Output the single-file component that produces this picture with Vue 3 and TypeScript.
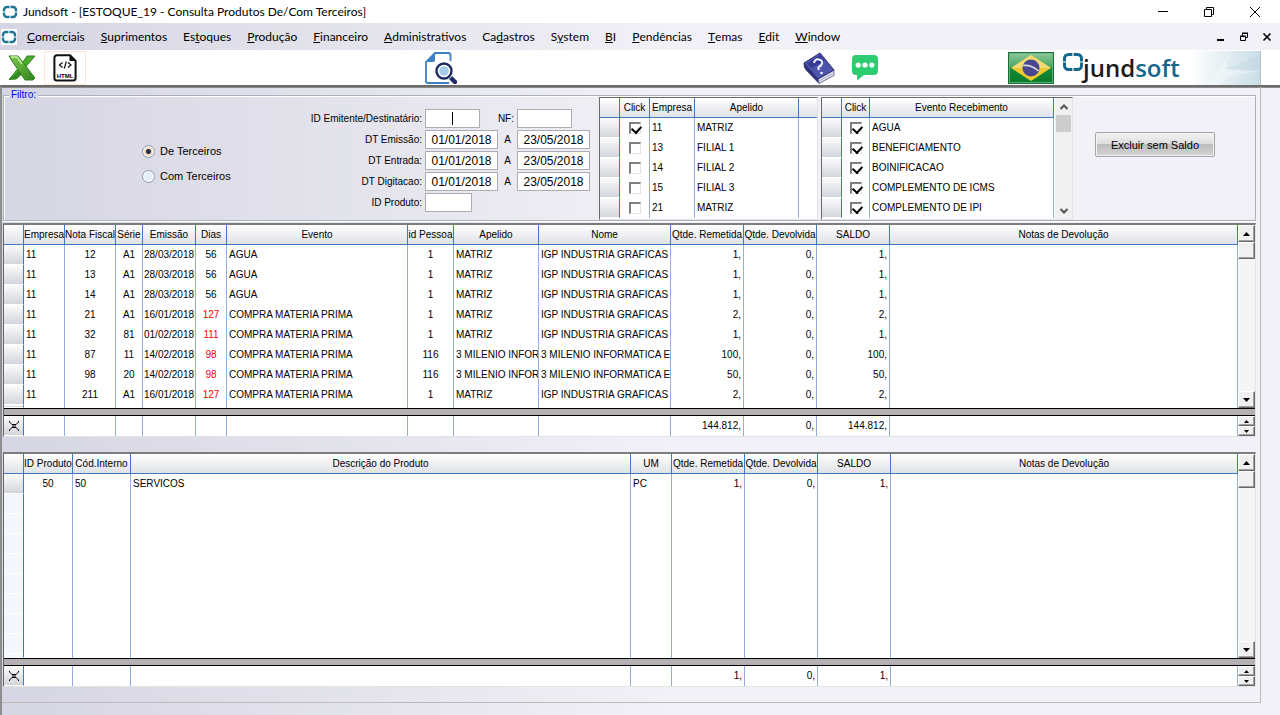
<script setup lang="ts">
import { ref } from 'vue'

type Align = 'left' | 'center' | 'right'
interface Column { title: string; width: number; align: Align }
interface Grid {
  id: string
  label: string
  columns: Column[]
  rows: string[][]
  totals: string[]
}

const menus: [string, string, string][] = [
  ['', 'C', 'omerciais'], ['', 'S', 'uprimentos'], ['Es', 't', 'oques'], ['', 'P', 'rodução'],
  ['', 'F', 'inanceiro'], ['', 'A', 'dministrativos'], ['Ca', 'd', 'astros'], ['S', 'y', 'stem'],
  ['', 'B', 'I'], ['', 'P', 'endências'], ['', 'T', 'emas'], ['', 'E', 'dit'], ['', 'W', 'indow'],
]

const origem = ref('de')
const idEmitente = ref('')
const notaFiscal = ref('')
const idProduto = ref('')
const periodos = ref([
  { id: 'emissao', label: 'DT Emissão:', de: '01/01/2018', ate: '23/05/2018' },
  { id: 'entrada', label: 'DT Entrada:', de: '01/01/2018', ate: '23/05/2018' },
  { id: 'digitacao', label: 'DT Digitacao:', de: '01/01/2018', ate: '23/05/2018' },
])

const empresas = ref([
  { click: true, id: '11', apelido: 'MATRIZ' },
  { click: false, id: '13', apelido: 'FILIAL 1' },
  { click: false, id: '14', apelido: 'FILIAL 2' },
  { click: false, id: '15', apelido: 'FILIAL 3' },
  { click: false, id: '21', apelido: 'MATRIZ' },
])
const eventos = ref(
  ['AGUA', 'BENEFICIAMENTO', 'BOINIFICACAO', 'COMPLEMENTO DE ICMS', 'COMPLEMENTO DE IPI']
    .map((nome) => ({ click: true, nome })),
)

const matriz = ['1', 'MATRIZ', 'IGP INDUSTRIA GRAFICAS']
const milenio = ['116', '3 MILENIO INFOR', '3 MILENIO INFORMATICA E J']
const compra = 'COMPRA MATERIA PRIMA'

const grids: Grid[] = [
  {
    id: 'notas',
    label: 'Notas fiscais',
    columns: [
      { title: 'Empresa', width: 41, align: 'left' },
      { title: 'Nota Fiscal', width: 51, align: 'center' },
      { title: 'Série', width: 27, align: 'center' },
      { title: 'Emissão', width: 53, align: 'center' },
      { title: 'Dias', width: 31, align: 'center' },
      { title: 'Evento', width: 181, align: 'left' },
      { title: 'id Pessoa', width: 46, align: 'center' },
      { title: 'Apelido', width: 85, align: 'left' },
      { title: 'Nome', width: 132, align: 'left' },
      { title: 'Qtde. Remetida', width: 73, align: 'right' },
      { title: 'Qtde. Devolvida', width: 73, align: 'right' },
      { title: 'SALDO', width: 73, align: 'right' },
      { title: 'Notas de Devolução', width: 0, align: 'left' },
    ],
    rows: [
      ['11', '12', 'A1', '28/03/2018', '56', 'AGUA', ...matriz, '1,', '0,', '1,', ''],
      ['11', '13', 'A1', '28/03/2018', '56', 'AGUA', ...matriz, '1,', '0,', '1,', ''],
      ['11', '14', 'A1', '28/03/2018', '56', 'AGUA', ...matriz, '1,', '0,', '1,', ''],
      ['11', '21', 'A1', '16/01/2018', '127', compra, ...matriz, '2,', '0,', '2,', ''],
      ['11', '32', '81', '01/02/2018', '111', compra, ...matriz, '1,', '0,', '1,', ''],
      ['11', '87', '11', '14/02/2018', '98', compra, ...milenio, '100,', '0,', '100,', ''],
      ['11', '98', '20', '14/02/2018', '98', compra, ...milenio, '50,', '0,', '50,', ''],
      ['11', '211', 'A1', '16/01/2018', '127', compra, ...matriz, '2,', '0,', '2,', ''],
    ],
    totals: ['', '', '', '', '', '', '', '', '', '144.812,', '0,', '144.812,', ''],
  },
  {
    id: 'produtos',
    label: 'Produtos',
    columns: [
      { title: 'ID Produto', width: 49, align: 'center' },
      { title: 'Cód.Interno', width: 58, align: 'left' },
      { title: 'Descrição do Produto', width: 500, align: 'left' },
      { title: 'UM', width: 41, align: 'left' },
      { title: 'Qtde. Remetida', width: 73, align: 'right' },
      { title: 'Qtde. Devolvida', width: 73, align: 'right' },
      { title: 'SALDO', width: 73, align: 'right' },
      { title: 'Notas de Devolução', width: 0, align: 'left' },
    ],
    rows: [['50', '50', 'SERVICOS', 'PC', '1,', '0,', '1,', '']],
    totals: ['', '', '', '', '1,', '0,', '1,', ''],
  },
]

const colStyle = (c: Column) => (c.width ? { width: `${c.width}px` } : {})
const isLate = (c: Column, value: string) => c.title === 'Dias' && Number(value) > 90
</script>

<template>
  <div class="app">
    <header class="titlebar">
      <svg class="mark" viewBox="0 0 16 16" aria-hidden="true">
        <rect x="2" y="3" width="12" height="10" rx="3" fill="none" stroke="#1d7799" stroke-width="2.400" />
        <path d="M8 0v16M0 8h16" stroke="#fff" stroke-width="1" />
      </svg>
      <h1>Jundsoft - [ESTOQUE_19 - Consulta Produtos De/Com Terceiros]</h1>
      <div class="window-buttons">
        <button type="button" aria-label="Minimizar">
          <svg viewBox="0 0 12 12"><path d="M1 5.500h10" /></svg>
        </button>
        <button type="button" aria-label="Restaurar">
          <svg viewBox="0 0 12 12"><path d="M1.500 3.500h7v7h-7zM3.500 3.500v-2h7v7h-2" /></svg>
        </button>
        <button type="button" aria-label="Fechar">
          <svg viewBox="0 0 12 12"><path d="M1 1l10 10M11 1L1 11" /></svg>
        </button>
      </div>
    </header>

    <nav class="menubar">
      <svg class="mark" viewBox="0 0 16 16" aria-hidden="true">
        <rect width="16" height="16" fill="#fff" />
        <rect x="2" y="3" width="12" height="10" rx="3" fill="none" stroke="#1d7799" stroke-width="2.400" />
        <path d="M8 0v16M0 8h16" stroke="#fff" stroke-width="1" />
      </svg>
      <div class="menus">
        <button v-for="m in menus" :key="m.join('')" type="button">{{ m[0] }}<u>{{ m[1] }}</u>{{ m[2] }}</button>
      </div>
      <div class="mdi-buttons">
        <button type="button" aria-label="Minimizar documento">
          <svg viewBox="0 0 10 10"><path d="M1 8h7" stroke-width="2" /></svg>
        </button>
        <button type="button" aria-label="Restaurar documento">
          <svg viewBox="0 0 10 10"><path d="M1.500 4.500h5v4h-5zM1 4h6M3.500 4V1.500h5v4H7M3 1h6" /></svg>
        </button>
        <button type="button" aria-label="Fechar documento">
          <svg viewBox="0 0 10 10"><path d="M1.500 1.500l7 7M8.500 1.500l-7 7" stroke-width="1.600" /></svg>
        </button>
      </div>
    </nav>

    <div class="toolbar">
      <button type="button" class="tool excel" aria-label="Exportar Excel">
        <svg viewBox="0 0 28 26">
          <defs>
            <linearGradient id="xg" x1="0" y1="0" x2="1" y2="1">
              <stop offset="0" stop-color="#7fc94a" /><stop offset="1" stop-color="#2c8420" />
            </linearGradient>
          </defs>
          <path d="M19 1h8L15 15 8 24l-7 .500L13 10z" fill="#4dab2e" stroke="#35821f" />
          <path d="M2 24l10-9 3 3-6 6z" fill="#2f8a22" />
          <path d="M1 1h9l17 22-2 2h-8L4 6z" fill="url(#xg)" stroke="#35821f" />
          <path d="M3 2h6l5 7" fill="none" stroke="#c5eda2" stroke-width="1.500" />
        </svg>
      </button>
      <button type="button" class="tool html" aria-label="Exportar HTML">
        <svg viewBox="0 0 24 28">
          <path d="M4 1.200h13L22.600 7v17q0 2.600-2.600 2.600H4q-2.600 0-2.600-2.600V4Q1.400 1.200 4 1.200z" fill="#fff" stroke="#111" stroke-width="2" />
          <path d="M17 1v5.500h6" fill="#111" stroke="#111" />
          <path d="M9.500 8.500L6.500 11l3 2.500M15 8.500l3 2.500-3 2.500M13.300 7.500l-2 7" fill="none" stroke="#111" stroke-width="1.200" />
          <text x="12" y="23.500" text-anchor="middle" font-family="Liberation Sans, sans-serif" font-size="6" font-weight="bold">HTML</text>
        </svg>
      </button>
      <button type="button" class="tool search" aria-label="Consultar">
        <svg viewBox="0 0 32 32">
          <path d="M25.500 9V3q0-2-2-2H10L1 10v19q0 2 2 2h21" fill="#fff" stroke="#3d81c2" stroke-width="1.800" />
          <path d="M10 1v7q0 2-2 2H1z" fill="#3d81c2" />
          <path d="M24 24l6 6" stroke="#1f2c63" stroke-width="4.500" stroke-linecap="round" />
          <circle cx="19" cy="19" r="9.500" fill="#fff" />
          <circle cx="19" cy="19" r="7.500" fill="#fff" stroke="#1f2c63" stroke-width="2.400" />
          <circle cx="19" cy="19" r="4.800" fill="#a5cbe8" />
        </svg>
      </button>
      <div class="tools-right">
        <button type="button" class="tool book" aria-label="Ajuda">
          <svg viewBox="0 0 32 32">
            <path d="M1 11l14 16 1 4.500L3 18Q.500 15 1 11z" fill="#2d2f80" stroke="#25265f" stroke-width=".600" />
            <path d="M15 27l16-9v5.500L16 31.500z" fill="#dddde8" stroke="#555a86" stroke-width=".800" />
            <path d="M16 29l14-7.500" stroke="#a3a4bb" stroke-width=".800" />
            <path d="M1 11L17 1l14 17-16 9z" fill="#4f55ad" stroke="#2b2d73" />
            <path d="M4 11.500L17 3l5 6-14 7z" fill="#343a94" />
            <path d="M11 11q1-4.500 5-3.500t3 4q-.500 2-2.500 3t-.500 3.500" fill="none" stroke="#f3f3ff" stroke-width="2" />
            <circle cx="18.500" cy="21" r="1.300" fill="#f3f3ff" />
          </svg>
        </button>
        <button type="button" class="tool chat" aria-label="Mensagens">
          <svg viewBox="0 0 26 26">
            <path d="M4 0h18q4 0 4 4v12q0 4-4 4H12l-7 5.500V20H4q-4 0-4-4V4q0-4 4-4z" fill="#2ecc71" />
            <circle cx="6.200" cy="10" r="2.600" fill="#fff" /><circle cx="13" cy="10" r="2.600" fill="#fff" /><circle cx="19.800" cy="10" r="2.600" fill="#fff" />
          </svg>
        </button>
        <button type="button" class="tool flag" aria-label="Idioma: Português do Brasil">
          <svg viewBox="0 0 46 32">
            <defs>
              <linearGradient id="fg" x1="0" y1="0" x2="0" y2="1">
                <stop offset="0" stop-color="#8fc89c" /><stop offset=".450" stop-color="#4ca764" />
                <stop offset=".500" stop-color="#148a37" /><stop offset="1" stop-color="#0a7a2c" />
              </linearGradient>
            </defs>
            <rect x=".500" y=".500" width="45" height="31" fill="url(#fg)" stroke="#1a6e38" />
            <rect x="1.500" y="1.500" width="43" height="29" fill="none" stroke="#6fb885" stroke-width=".800" />
            <path d="M23 3l20 13-20 13L3 16z" fill="#ecc92c" />
            <path d="M23 3l20 13H3z" fill="#f0dc76" />
            <circle cx="23" cy="16" r="8.500" fill="#4b4690" />
            <path d="M15 13.500q8-1 15.500 5.500" fill="none" stroke="#d8ddd0" stroke-width="1.600" />
          </svg>
        </button>
        <div class="brand">
          <svg class="brand-mark" viewBox="0 0 20 18" aria-hidden="true">
            <rect x="1.500" y="1.500" width="17" height="15" rx="4" fill="none" stroke="#15678e" stroke-width="3" />
            <path d="M10 0v18M0 9h20" stroke="#fff" stroke-width="1.200" />
          </svg>
          <span class="brand-name">jund<b>soft</b></span>
          <svg class="brand-art" viewBox="0 0 70 34" preserveAspectRatio="none" aria-hidden="true">
            <defs>
              <linearGradient id="bg"><stop offset="0" stop-color="#fff" /><stop offset="1" stop-color="#c9dde6" /></linearGradient>
            </defs>
            <rect width="70" height="34" fill="url(#bg)" />
            <path d="M20 34L40 0l-4 18 34 2-32 6-8 8z" fill="#fff" opacity=".3" />
            <path d="M36 18L70 4v16z" fill="#b9d2de" opacity=".3" />
          </svg>
        </div>
      </div>
    </div>

    <main class="document">
      <div class="sheet">
        <fieldset class="filter">
          <legend>Filtro:</legend>

          <div class="origin" role="radiogroup" aria-label="Origem">
            <label><input v-model="origem" type="radio" name="origem" value="de" />De Terceiros</label>
            <label><input v-model="origem" type="radio" name="origem" value="com" />Com Terceiros</label>
          </div>

          <div class="fields">
            <label for="emitente">ID Emitente/Destinatário:</label>
            <input id="emitente" v-model="idEmitente" class="short caret" type="text" />
            <label for="nf">NF:</label>
            <input id="nf" v-model="notaFiscal" class="short" type="text" />
            <template v-for="p in periodos" :key="p.id">
              <label :for="p.id">{{ p.label }}</label>
              <input :id="p.id" v-model="p.de" type="text" />
              <label :for="p.id + '-ate'" class="until">A</label>
              <input :id="p.id + '-ate'" v-model="p.ate" type="text" />
            </template>
            <label for="produto">ID Produto:</label>
            <input id="produto" v-model="idProduto" class="tiny" type="text" />
          </div>

          <div class="picker companies">
            <table aria-label="Empresas">
              <colgroup><col class="w20" /><col class="w30" /><col class="w45" /><col class="w104" /><col /></colgroup>
              <thead><tr><th></th><th>Click</th><th>Empresa</th><th>Apelido</th><th></th></tr></thead>
              <tbody>
                <tr v-for="e in empresas" :key="e.id">
                  <td class="ind"></td>
                  <td class="center"><input v-model="e.click" type="checkbox" :aria-label="e.id" /></td>
                  <td>{{ e.id }}</td><td>{{ e.apelido }}</td><td></td>
                </tr>
              </tbody>
            </table>
          </div>

          <div class="picker events">
            <table aria-label="Eventos">
              <colgroup><col class="w20" /><col class="w28" /><col /></colgroup>
              <thead><tr><th></th><th>Click</th><th>Evento Recebimento</th></tr></thead>
              <tbody>
                <tr v-for="e in eventos" :key="e.nome">
                  <td class="ind"></td>
                  <td class="center"><input v-model="e.click" type="checkbox" :aria-label="e.nome" /></td>
                  <td>{{ e.nome }}</td>
                </tr>
              </tbody>
            </table>
            <div class="flat-scroll">
              <button type="button" aria-label="Subir"><svg viewBox="0 0 10 8"><path d="M1.500 6L5 2.500 8.500 6" /></svg></button>
              <div class="thumb"></div>
              <button type="button" aria-label="Descer"><svg viewBox="0 0 10 8"><path d="M1.500 2L5 5.500 8.500 2" /></svg></button>
            </div>
          </div>

          <button type="button" class="action">Excluir sem Saldo</button>
        </fieldset>

        <section v-for="g in grids" :key="g.id" class="grid" :class="g.id">
          <div class="grid-body">
            <table :aria-label="g.label">
              <colgroup><col class="w20" /><col v-for="c in g.columns" :key="c.title" :style="colStyle(c)" /></colgroup>
              <thead><tr><th></th><th v-for="c in g.columns" :key="c.title">{{ c.title }}</th></tr></thead>
              <tbody>
                <tr v-for="(r, i) in g.rows" :key="i">
                  <td class="ind"></td>
                  <td v-for="(c, j) in g.columns" :key="c.title" :class="[c.align, { late: isLate(c, r[j]) }]">{{ r[j] }}</td>
                </tr>
                <tr class="filler"><td class="ind"></td><td v-for="c in g.columns" :key="c.title"></td></tr>
              </tbody>
            </table>
            <div class="classic-scroll">
              <button type="button" aria-label="Subir"><svg viewBox="0 0 7 4"><path d="M0 4l3.500-4L7 4z" /></svg></button>
              <div class="thumb"></div>
              <button type="button" class="down" aria-label="Descer"><svg viewBox="0 0 7 4"><path d="M0 0l3.500 4L7 0z" /></svg></button>
            </div>
          </div>
          <div class="splitter"></div>
          <div class="grid-foot">
            <table :aria-label="'Totais - ' + g.label">
              <colgroup><col class="w20" /><col v-for="c in g.columns" :key="c.title" :style="colStyle(c)" /></colgroup>
              <tbody>
                <tr>
                  <td class="ind sum">
                    <svg viewBox="0 0 10 10" aria-hidden="true"><path d="M.500 0v1l2.500 2.500h4L9.500 1V0M.500 10V9L3 6.500h4L9.500 9v1M3 3.500L4.500 5 3 6.500M7 3.500L5.500 5 7 6.500" /></svg>
                  </td>
                  <td v-for="(c, j) in g.columns" :key="c.title" :class="c.align">{{ g.totals[j] }}</td>
                </tr>
              </tbody>
            </table>
            <div class="spin">
              <button type="button" aria-label="Anterior"><svg viewBox="0 0 5 3"><path d="M0 3l2.500-3L5 3z" /></svg></button>
              <button type="button" aria-label="Próximo"><svg viewBox="0 0 5 3"><path d="M0 0l2.500 3L5 0z" /></svg></button>
            </div>
          </div>
        </section>
      </div>
    </main>
  </div>
</template>

<style>
body {
  margin: 0;
}
</style>

<style scoped>
* {
  box-sizing: border-box;
}
button,
input {
  font: inherit;
  color: inherit;
  margin: 0;
  padding: 0;
}
button {
  border: 0;
  background: none;
  display: flex;
  align-items: center;
  justify-content: center;
}
.app {
  --tint: linear-gradient(90deg, #d6d5e3 0, #e3e3ec 340px, #f2f1f7 680px);
  display: flex;
  flex-direction: column;
  min-height: 100vh;
  background: #fff;
  color: #000;
  font: 10px/14px "Liberation Sans", Arial, sans-serif;
}

/* title bar and menu */
.titlebar,
.menubar {
  display: flex;
  align-items: center;
  font-family: Lato, "Open Sans", sans-serif;
}
.titlebar {
  height: 23px;
}
.mark {
  width: 16px;
  height: 16px;
  margin-left: 2px;
}
.titlebar h1 {
  margin: 0 0 0 5px;
  font-size: 12px;
  line-height: 16px;
  font-weight: 400;
}
.window-buttons,
.mdi-buttons {
  display: flex;
  margin-left: auto;
}
.window-buttons {
  margin-right: 2px;
}
.window-buttons button {
  width: 46px;
  height: 20px;
}
.window-buttons svg {
  width: 12px;
  height: 12px;
}
.window-buttons path,
.mdi-buttons path {
  fill: none;
  stroke: #000;
}
.menubar {
  height: 27px;
  background: var(--tint);
}
.menubar .mark {
  margin-left: 1px;
}
.menus {
  display: flex;
  gap: 16px;
  margin-left: 10px;
  font-size: 12px;
  line-height: 16px;
}
.mdi-buttons {
  gap: 13px;
  margin-right: 8px;
}
.mdi-buttons svg {
  width: 10px;
  height: 10px;
}

/* toolbar */
.toolbar {
  display: flex;
  align-items: center;
  height: 35px;
  padding-right: 19px;
}
.tool svg {
  display: block;
  width: 100%;
}
.excel {
  width: 28px;
  margin-left: 8px;
}
.html {
  width: 42px;
  height: 34px;
  padding: 0 8px;
  margin-left: 8px;
  border: 1px solid #fbe8d6;
}
.search {
  width: 32px;
  margin-left: 339px;
}
.tools-right {
  display: flex;
  align-items: center;
  margin-left: auto;
}
.book {
  width: 32px;
}
.chat {
  width: 26px;
  margin-left: 17px;
}
.flag {
  width: 46px;
  margin-left: 130px;
}
.brand {
  display: flex;
  width: 198px;
  margin-left: 9px;
  height: 34px;
}
.brand-mark {
  width: 20px;
  height: 18px;
  margin-top: 2px;
}
.brand-name {
  font: 600 24px/34px "Open Sans", sans-serif;
  color: #1b1b1d;
}
.brand-name b {
  font-weight: 600;
  color: #15678e;
}
.brand-art {
  flex: 1;
  min-width: 0;
  height: 34px;
  margin-left: 9px;
  border-right: 1px solid #b9c0c6;
}

/* document window */
.document {
  flex: 1;
  display: flex;
  padding: 0 19px 12px 1px;
  border-top: 2px solid #6b6b6b;
  border-left: 1px solid #909090;
  box-shadow: inset 1px 1px 0 #8a8a8a;
  background: var(--tint);
}
.sheet {
  flex: 1;
  min-width: 0;
  display: flex;
  flex-direction: column;
  padding: 8px 4px 15px 1px;
  border-right: 1px solid #bcbcbc;
  border-bottom: 1px solid #bcbcbc;
}
.filter {
  position: relative;
  display: flex;
  min-width: 0;
  height: 126px;
  margin: 0;
  padding: 0;
  border: 1px solid #a9b1ba;
  box-shadow: inset 1px 1px 0 #fff, 0 1px 0 #fff;
}
.filter legend {
  position: absolute;
  top: -8px;
  left: 5px;
  padding: 0 2px;
  background: #d7d6e4;
  color: #00f;
}
.origin {
  display: flex;
  flex-direction: column;
  gap: 11px;
  width: 302px;
  padding: 48px 0 0 138px;
}
.origin label {
  display: flex;
  align-items: center;
  gap: 5px;
}
.origin input {
  appearance: none;
  width: 13px;
  height: 13px;
  border: 1px solid #8e9caa;
  border-radius: 50%;
  background: radial-gradient(circle, #e4eef8 0 3px, #f8fbfd 5px);
}
.origin input:checked {
  background: radial-gradient(circle, #1e3150 0 2px, #f3cda9 3px, #f8f5f0 5px);
}
.fields {
  display: grid;
  grid-template-columns: 116px 73px 13px 73px;
  grid-auto-rows: 19px;
  column-gap: 3px;
  row-gap: 2px;
  align-items: center;
  align-content: start;
  padding-top: 13px;
}
.fields label {
  display: flex;
  justify-content: flex-end;
  white-space: nowrap;
}
.fields .until {
  justify-content: center;
}
.fields input {
  width: 100%;
  height: 19px;
  border: 1px solid #abadb3;
  background: #fff;
  text-align: center;
  font-size: 12px;
  line-height: 16px;
  outline: 0;
}
.fields .short {
  width: 55px;
}
.fields .tiny {
  width: 47px;
}
.fields .caret {
  background: linear-gradient(#000, #000) center / 1px 13px no-repeat #fff;
}
.origin,
.action {
  font-size: 11px;
}

/* shared tables */
table {
  table-layout: fixed;
  border-collapse: separate;
  border-spacing: 0;
  background: #fff;
}
th,
td {
  padding: 0 2px;
  overflow: hidden;
  white-space: nowrap;
  border-right: 1px solid #93b0dc;
  text-align: left;
  font-weight: 400;
}
th {
  height: 20px;
  padding: 0;
  border-right-color: #3f78c3;
  border-bottom: 1px solid #3f78c3;
  background: linear-gradient(#fff, #dfe1e5);
  text-align: center;
}
td {
  height: 20px;
}
.center {
  padding: 0 1px;
  text-align: center;
}
.right {
  text-align: right;
}
.late {
  color: #f00;
}
.ind {
  border-right-color: #3f78c3;
  border-bottom: 1px solid #fff;
  background: linear-gradient(#fcfcfd, #d2d5da);
}
.w20 { width: 20px; }
.w28 { width: 28px; }
.w30 { width: 30px; }
.w45 { width: 45px; }
.w104 { width: 104px; }

/* check lists */
.picker {
  display: flex;
  height: 123px;
  margin-top: 1px;
  border: 1px solid #e3e3e3;
  border-top-color: #696969;
  border-left-color: #696969;
  background: #fff;
}
.picker table {
  flex: 1;
  align-self: flex-start;
}
.companies {
  width: 219px;
  margin-left: 9px;
}
.companies th:last-child,
.companies td:last-child {
  border-right: 0;
}
.events {
  width: 252px;
  margin-left: 3px;
}
.picker .center {
  padding: 0;
}
.picker td input {
  appearance: none;
  display: block;
  width: 12px;
  height: 12px;
  margin: 0 auto;
  border: 1px solid #e3e3e3;
  border-top: 2px solid #808080;
  border-left: 2px solid #808080;
  background: #fff;
}
.picker td input:checked::before {
  content: "";
  display: block;
  width: 5px;
  height: 7px;
  margin: 0 0 0 2px;
  border: solid #000;
  border-width: 0 2px 2px 0;
  transform: rotate(42deg);
}
.flat-scroll {
  display: flex;
  flex-direction: column;
  width: 18px;
  padding: 0 1px;
  border-left: 1px solid #fff;
  background: #f0f0f0;
}
.flat-scroll button {
  height: 17px;
}
.flat-scroll button:last-child {
  margin-top: auto;
}
.flat-scroll svg {
  width: 10px;
  height: 8px;
  fill: none;
  stroke: #505050;
  stroke-width: 2;
}
.flat-scroll .thumb {
  height: 17px;
  background: #cdcdcd;
}
.action {
  align-self: flex-start;
  width: 120px;
  height: 25px;
  margin: 36px 0 0 22px;
  border: 1px solid #a5a5a5;
  border-radius: 2px;
  background: linear-gradient(#f4f4f4, #dcdcdc 48%, #bdbdbd 50%, #d4d4d4);
  box-shadow: inset 0 0 0 1px #f2f2f2;
}

/* data grids */
.grid {
  display: flex;
  flex-direction: column;
  border: 1px solid #e3e3e3;
  border-top: 2px solid #7c7c7c;
  border-left-color: #696969;
}
.notas {
  margin-top: 2px;
}
.produtos {
  flex: 1;
  margin-top: 15px;
}
.grid-body {
  flex: 1;
  display: flex;
  background: #fff;
}
.grid-body table,
.grid-foot table {
  flex: 1;
  width: 0;
}
.filler td {
  height: 3px;
}
.produtos .filler td {
  height: 100%;
}
.produtos .filler .ind {
  background: repeating-linear-gradient(#f3f7fd 0 19px, #fff 19px 20px);
}
.classic-scroll,
.spin {
  display: flex;
  flex-direction: column;
  width: 17px;
}
.classic-scroll {
  background: #f5f5f5;
}
.classic-scroll button,
.classic-scroll .thumb,
.spin button {
  border: 1px solid #fff;
  border-right-color: #696969;
  border-bottom-color: #696969;
  background: #f0f0f0;
  box-shadow: inset -1px -1px 0 #a0a0a0;
}
.classic-scroll button {
  height: 17px;
}
.classic-scroll .thumb {
  height: 17px;
}
.classic-scroll .down {
  margin-top: auto;
}
.classic-scroll svg {
  width: 7px;
  height: 4px;
}
.splitter {
  height: 8px;
  border: solid #000;
  border-width: 1px 0;
  background: #b4b0b4;
}
.grid-foot {
  display: flex;
  background: #fff;
}
.spin button {
  height: 10px;
}
.spin svg {
  width: 5px;
  height: 3px;
}
.sum {
  text-align: center;
}
.sum svg {
  display: block;
  width: 10px;
  height: 10px;
  margin: 0 auto;
  fill: none;
  stroke: #000;
}
</style>
